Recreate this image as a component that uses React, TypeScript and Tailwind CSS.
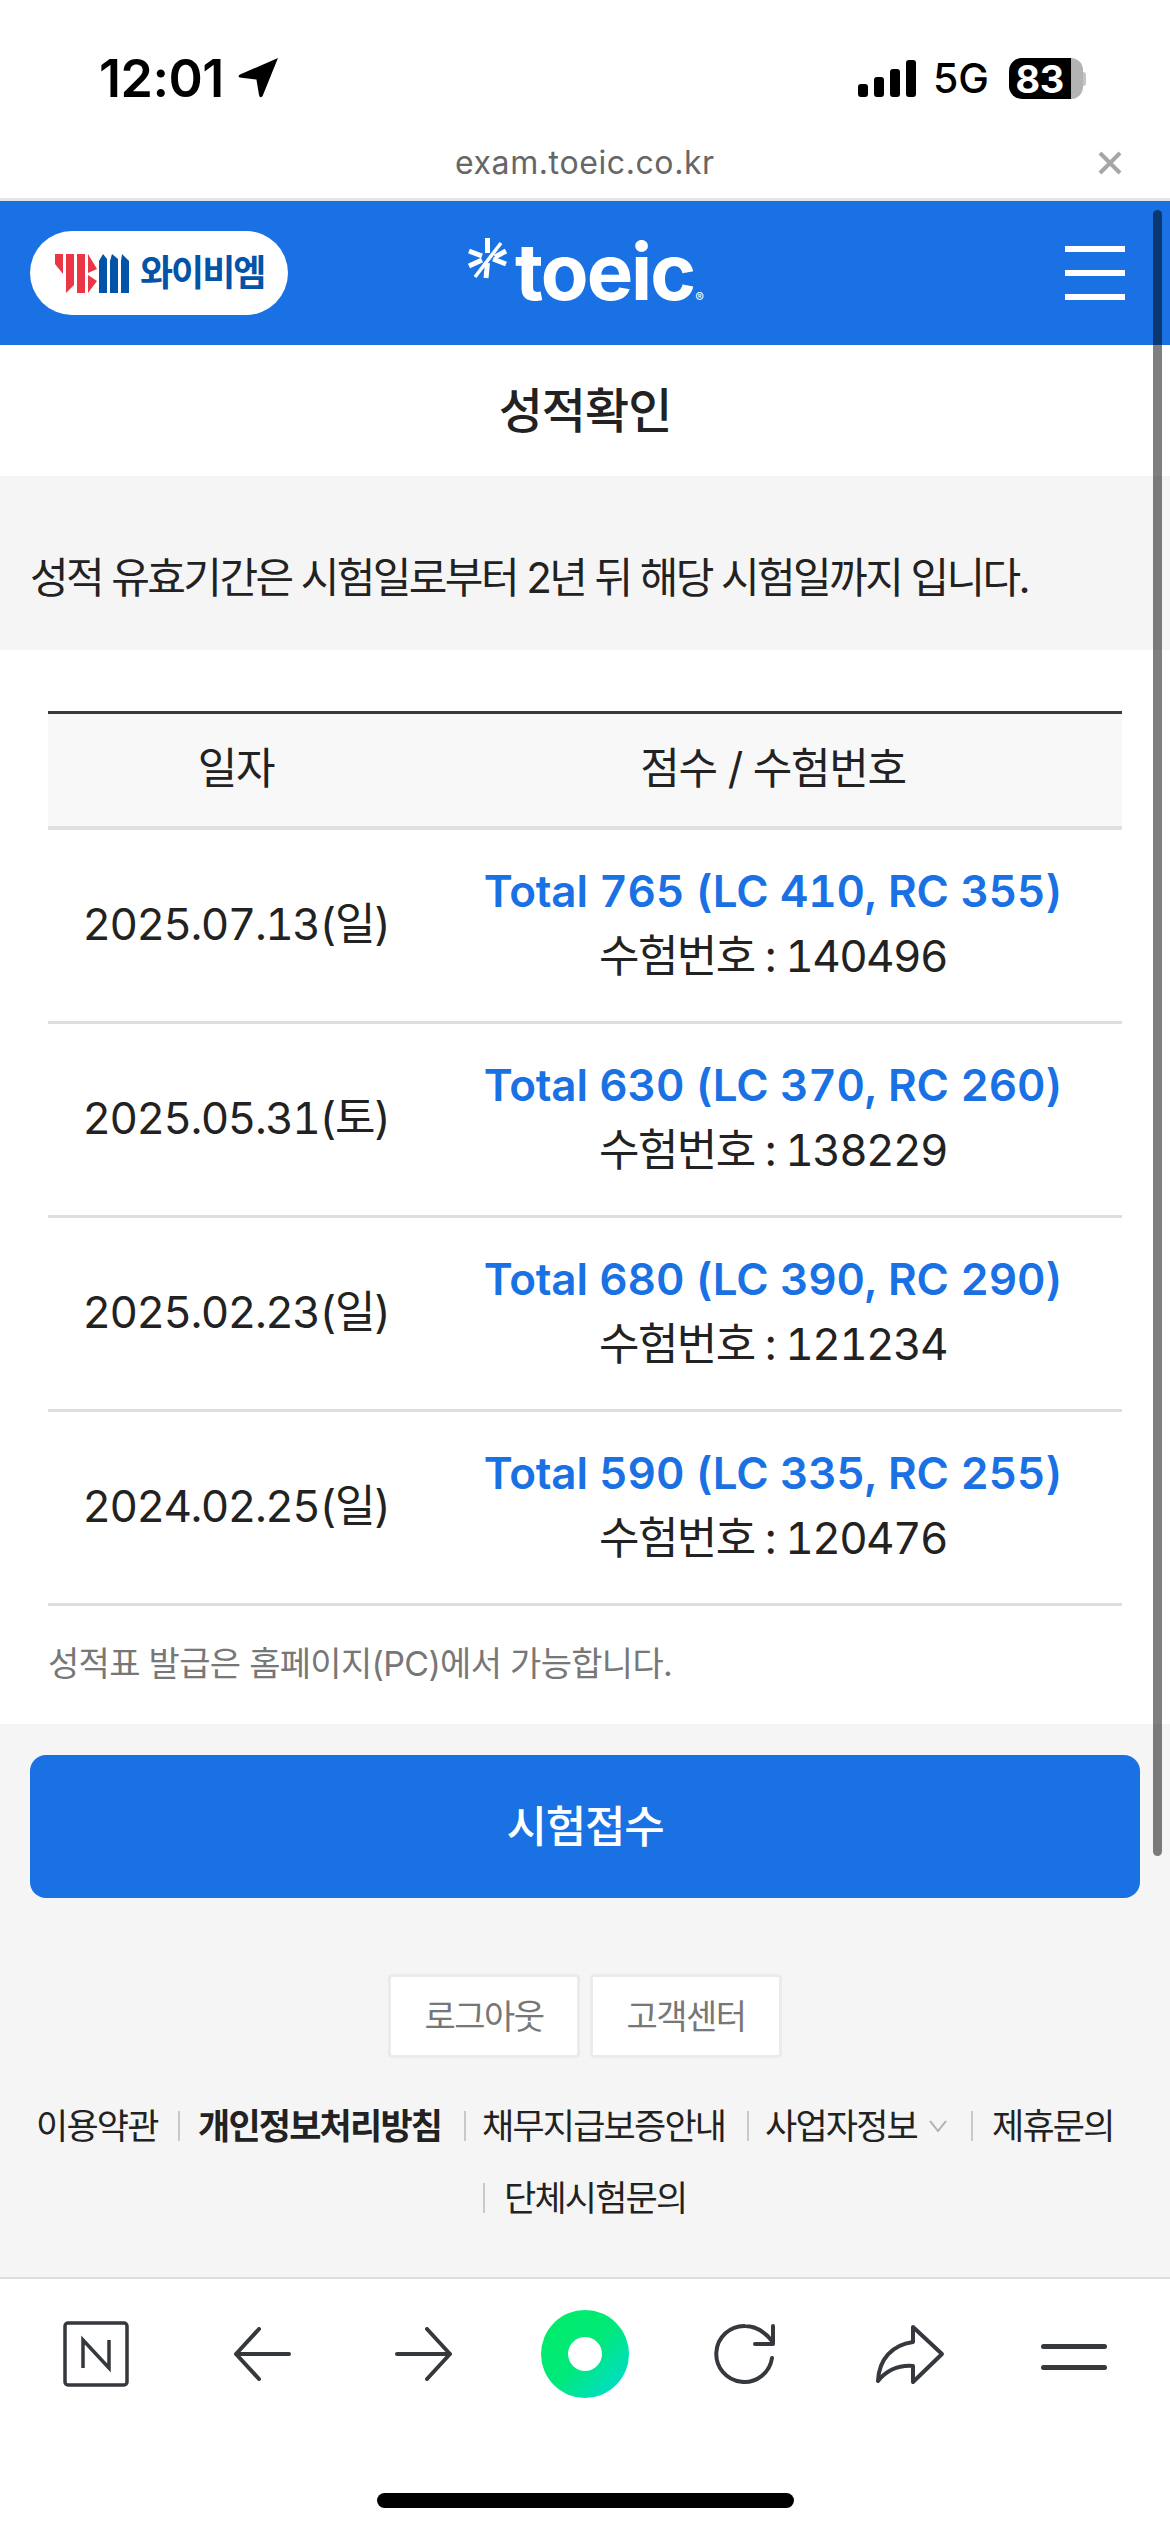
const FONT = "[font-family:Inter,'Noto_Sans_CJK_KR',sans-serif]";

const rows = [
  { date: "2025.07.13(일)", score: "Total 765 (LC 410, RC 355)", no: "140496" },
  { date: "2025.05.31(토)", score: "Total 630 (LC 370, RC 260)", no: "138229" },
  { date: "2025.02.23(일)", score: "Total 680 (LC 390, RC 290)", no: "121234" },
  { date: "2024.02.25(일)", score: "Total 590 (LC 335, RC 255)", no: "120476" },
];

function StatusBar() {
  return (
    <div className="h-[130px] shrink-0 bg-white flex items-center pl-[99px] pr-[84px] pt-[27px]">
      <span className="text-[52px] leading-none font-semibold text-black tracking-[-0.5px]">12:01</span>
      <svg className="ml-[14px] mt-[-2px]" width="41" height="41" viewBox="0 0 40 40">
        <path d="M39 1 L24 38 Q21.500 41 20.500 37 L18 22 L1.500 20 Q-0.500 18.500 2 17 Z" fill="#000" />
      </svg>
      <div className="ml-auto flex items-center">
        <svg width="60" height="37" viewBox="0 0 60 37">
          <rect x="0" y="24" width="10" height="13" rx="3" fill="#000" />
          <rect x="16" y="17" width="10" height="20" rx="3" fill="#000" />
          <rect x="32" y="9" width="10" height="28" rx="3" fill="#000" />
          <rect x="48" y="0" width="10" height="37" rx="3" fill="#000" />
        </svg>
        <span className="ml-[15px] text-[41px] leading-none font-medium text-black">5G</span>
        <div className="ml-[20px] w-[62px] h-[41px] bg-black rounded-l-[13px] flex items-center justify-center">
          <span className="text-[38px] leading-none font-bold text-white tabular-nums">83</span>
        </div>
        <div className="w-[12px] h-[41px] bg-[#b3b3b3] rounded-r-[13px]" />
        <div className="w-[3px] h-[14px] bg-[#c4c4c4] rounded-r-full" />
      </div>
    </div>
  );
}

function UrlBar() {
  return (
    <div className="h-[71px] shrink-0 bg-white border-b-[3px] border-[#e3e3e5] flex items-center relative">
      <span className="ml-[455px] text-[32px] leading-none text-[#666666] tracking-[0.6px] mt-[-2px]">exam.toeic.co.kr</span>
      <svg className="ml-auto mr-[48px] mt-[-2px]" width="24" height="24" viewBox="0 0 24 24">
        <path d="M2 2 L22 22 M22 2 L2 22" stroke="#a6a6a6" strokeWidth="4" />
      </svg>
    </div>
  );
}

function YbmLogo() {
  return (
    <svg width="74" height="39" viewBox="0 0 74 39">
      <g fill="#ea3645">
        <polygon points="0,0 8,0 8,20 0,10" />
        <polygon points="11,0 19,0 19,31 11,39" />
        <polygon points="22,0 30,0 30,39 22,39" />
        <polygon points="33,0 42,15 33,19" />
        <polygon points="33,21 42,27 33,39" />
      </g>
      <g fill="#0353a8">
        <polygon points="44,7 48,0 52,5 52,39 44,39" />
        <polygon points="55,7 57,0 63,5 63,39 55,39" />
        <polygon points="66,7 67,0 74,7 74,39 66,39" />
      </g>
    </svg>
  );
}

function Header() {
  return (
    <div className="h-[144px] shrink-0 bg-[#1971e3] flex items-center pl-[30px] pr-[45px]">
      <div className="w-[258px] h-[84px] rounded-[42px] bg-white flex items-center pl-[25px] shrink-0">
        <YbmLogo />
        <span className="ml-[11px] text-[36px] leading-none font-bold text-[#0353a8] tracking-[-2px]">와이비엠</span>
      </div>
      <div className="ml-[179px] flex items-end h-[70px] mt-[-2px]">
        <svg className="self-start" width="41" height="42" viewBox="0 0 41 42">
          <g stroke="#fff" strokeWidth="5" strokeLinecap="butt">
            <path d="M20.500 1 L20.500 16" />
            <path d="M20.500 26 L19 41" />
            <path d="M2 14 L15 19" />
            <path d="M26 22 L39 27" />
            <path d="M2 29 L15 23" />
            <path d="M8 40 L34 6" strokeWidth="3.500" />
            <path d="M28 20 L39 14" />
          </g>
        </svg>
        <span className="ml-[7px] text-[78px] leading-[70px] font-bold text-white tracking-[-2px] h-[70px]">toeic</span>
        <span className="ml-[1px] mb-[3px] text-[13px] leading-none text-white">®</span>
      </div>
      <div className="ml-auto flex flex-col gap-[18px]">
        <div className="w-[60px] h-[6px] bg-white" />
        <div className="w-[60px] h-[6px] bg-white" />
        <div className="w-[60px] h-[6px] bg-white" />
      </div>
    </div>
  );
}

function ScoreTable() {
  return (
    <div className="bg-white h-[1074px] shrink-0 px-[48px] pt-[61px]">
      <div className="border-t-[3px] border-t-[#3a3a3a] bg-[#f8f8f8] border-b-[4px] border-b-[#e0e0e0] h-[119px] grid grid-cols-[376px_1fr] items-center text-[43px] text-[#222222] tracking-[-1.300px]">
        <div className="text-center pb-[4px]">일자</div>
        <div className="text-center pb-[4px]">점수 / 수험번호</div>
      </div>
      {rows.map((r) => (
        <div key={r.no} className="h-[194px] border-b-[3px] border-[#dedede] grid grid-cols-[376px_1fr] items-center">
          <div className="text-center text-[44px] pb-[4px] text-[#222222] tabular-nums tracking-[-1.500px]">{r.date}</div>
          <div className="text-center pb-[3px]">
            <div className="text-[44px] leading-[65px] font-semibold text-[#1971e3] tabular-nums tracking-[-0.2px]">{r.score}</div>
            <div className="text-[44px] leading-[65px] text-[#222222] tabular-nums tracking-[-1.600px]">수험번호 : {r.no}</div>
          </div>
        </div>
      ))}
      <p className="mt-[41px] text-[34px] leading-none text-[#777777] tracking-[-0.7px]">성적표 발급은 홈페이지(PC)에서 가능합니다.</p>
    </div>
  );
}

function Sep() {
  return <span className="block w-[2px] h-[30px] bg-[#c9c9c9]" />;
}

function Footer() {
  return (
    <div className="flex-1 min-h-0 bg-[#f5f5f5] px-[30px] pt-[31px] border-b-[2px] border-[#dcdde0]">
      <button className="w-full h-[143px] rounded-[16px] bg-[#1971e3] text-white text-[44px] font-medium tracking-[-1.200px]">시험접수</button>
      <div className="mt-[76px] flex justify-center gap-[10px]">
        <button className="w-[192px] h-[84px] rounded-[4px] bg-white border-[3px] border-[#ebebeb] text-[34px] text-[#777777] tracking-[-1.500px]">로그아웃</button>
        <button className="w-[192px] h-[84px] rounded-[4px] bg-white border-[3px] border-[#ebebeb] text-[34px] text-[#777777] tracking-[-1.500px]">고객센터</button>
      </div>
      <div className="mt-[32px] ml-[6px] flex items-center h-[72px] text-[35px] text-[#222222] tracking-[-1.800px] whitespace-nowrap">
        <span className="w-[122px]">이용약관</span>
        <span className="ml-[20px]"><Sep /></span>
        <span className="ml-[18px] w-[244px] font-bold">개인정보처리방침</span>
        <span className="ml-[22px]"><Sep /></span>
        <span className="ml-[16px] w-[245px]">채무지급보증안내</span>
        <span className="ml-[20px]"><Sep /></span>
        <span className="ml-[16px] w-[154px]">사업자정보</span>
        <svg className="ml-[9px]" width="20" height="14" viewBox="0 0 20 14">
          <path d="M2 2 L10 12 L18 2" fill="none" stroke="#b0b0b0" strokeWidth="2" />
        </svg>
        <span className="ml-[23px]"><Sep /></span>
        <span className="ml-[19px]">제휴문의</span>
      </div>
      <div className="ml-[453px] flex items-center h-[72px] text-[35px] text-[#222222] tracking-[-1.800px] whitespace-nowrap">
        <span><Sep /></span>
        <span className="ml-[19px]">단체시험문의</span>
      </div>
    </div>
  );
}

function BottomBar() {
  const ink = "#35383d";
  return (
    <div className="h-[253px] shrink-0 bg-white flex flex-col">
      <div className="h-[120px] mt-[32px] flex items-center relative">
        <svg className="absolute left-[63px] top-[10px]" width="66" height="66" viewBox="0 0 66 66">
          <rect x="2" y="2" width="62" height="62" rx="3" fill="none" stroke={ink} strokeWidth="3.500" />
          <path d="M20 47 V19 L46 47 V19" fill="none" stroke={ink} strokeWidth="3.500" strokeLinejoin="miter" />
        </svg>
        <svg className="absolute left-[233px] top-[16px]" width="58" height="54" viewBox="0 0 58 54">
          <path d="M26 2 L3 27 L26 52 M3 27 H56" fill="none" stroke={ink} strokeWidth="4" strokeLinecap="round" strokeLinejoin="round" />
        </svg>
        <svg className="absolute left-[395px] top-[16px]" width="58" height="54" viewBox="0 0 58 54">
          <path d="M32 2 L55 27 L32 52 M55 27 H2" fill="none" stroke={ink} strokeWidth="4" strokeLinecap="round" strokeLinejoin="round" />
        </svg>
        <div className="absolute left-[541px] top-[-1px] w-[88px] h-[88px] rounded-full bg-gradient-to-br from-[#00ee66] via-[#00e878] to-[#00d8d8] flex items-center justify-center">
          <div className="w-[34px] h-[34px] rounded-full bg-white" />
        </div>
        <svg className="absolute left-[712px] top-[10px]" width="66" height="66" viewBox="0 0 66 66">
          <path d="M60 37 A28 28 0 1 1 33 5 C44 5 52 10 60 20" fill="none" stroke={ink} strokeWidth="4" strokeLinecap="round" />
          <path d="M61 5 V23 H43" fill="none" stroke={ink} strokeWidth="4" strokeLinecap="round" strokeLinejoin="round" />
        </svg>
        <svg className="absolute left-[875px] top-[13px]" width="70" height="62" viewBox="0 0 70 62">
          <path d="M38 3 L67 30 L38 58 V42 C24 41 12 46 3 57 C4 35 17 21 38 18 Z" fill="none" stroke={ink} strokeWidth="4" strokeLinejoin="round" />
        </svg>
        <div className="absolute left-[1041px] top-[33px] w-[66px] flex flex-col gap-[16px]">
          <div className="h-[5px] rounded-full bg-[#35383d]" />
          <div className="h-[5px] rounded-full bg-[#35383d]" />
        </div>
      </div>
      <div className="mt-auto mb-[24px] mx-auto w-[417px] h-[15px] rounded-full bg-black" />
    </div>
  );
}

export default function App() {
  return (
    <div className={`${FONT} relative w-[1170px] h-[2532px] overflow-hidden bg-white flex flex-col`}>
      <StatusBar />
      <UrlBar />
      <Header />
      <div className="h-[131px] shrink-0 bg-white flex items-center justify-center">
        <h1 className="text-[48px] font-medium text-[#222222] tracking-[-1px]">성적확인</h1>
      </div>
      <div className="h-[174px] shrink-0 bg-[#f5f5f5] flex items-center pl-[30px]">
        <p className="text-[42px] mt-[29px] text-[#222222] tracking-[-2.600px]">성적 유효기간은 시험일로부터 2년 뒤 해당 시험일까지 입니다.</p>
      </div>
      <ScoreTable />
      <Footer />
      <BottomBar />
      <div className="absolute left-[1153px] top-[210px] w-[9px] h-[1646px] rounded-full bg-black/50" />
    </div>
  );
}
